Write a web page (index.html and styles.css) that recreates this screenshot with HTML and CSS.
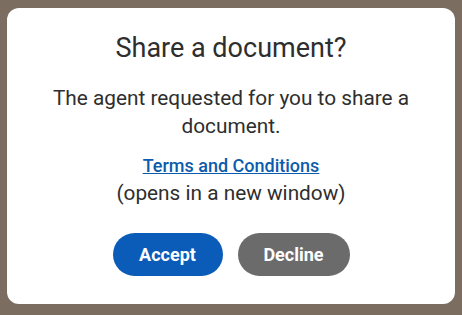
FILE: index.html
```html
<!DOCTYPE html>
<html lang="en">
<head>
  <meta charset="UTF-8">
  <title>Share a document?</title>
  <link rel="stylesheet" href="styles.css">
</head>
<body>
  <div class="dialog">
    <h1 class="dialog-title">Share a document?</h1>
    <p class="dialog-text">The agent requested for you to share a document.</p>
    <div class="terms">
      <a href="#" class="terms-link">Terms and Conditions</a>
      <span class="terms-note">(opens in a new window)</span>
    </div>
    <div class="actions">
      <button class="btn btn-accept">Accept</button>
      <button class="btn btn-decline">Decline</button>
    </div>
  </div>
</body>
</html>
```

FILE: styles.css
```css
html, body {
  height: 100%;
}

body {
  margin: 0;
  padding: 8px 7px 11px 7px;
  box-sizing: border-box;
  background-color: #7b6e60;
  font-family: Roboto, "Liberation Sans", sans-serif;
}

.dialog {
  background-color: #fff;
  border-radius: 12px;
  height: 100%;
  box-sizing: border-box;
  padding: 23px 20px 0;
  text-align: center;
  color: #2e2e2e;
}

.dialog-title {
  margin: 0;
  font-size: 27px;
  font-weight: 400;
  line-height: 34px;
}

.dialog-text {
  margin: 19px 0 0;
  font-size: 20.8px;
  line-height: 28px;
}

.terms {
  margin-top: 14px;
  display: flex;
  flex-direction: column;
  align-items: center;
}

.terms-link {
  color: #0b5cae;
  font-size: 18px;
  font-weight: 500;
  line-height: 24px;
}

.terms-note {
  font-size: 20.8px;
  line-height: 30px;
}

.actions {
  margin-top: 25px;
  display: flex;
  justify-content: center;
  gap: 15px;
}

.btn {
  border: none;
  border-radius: 22px;
  height: 43px;
  padding: 0;
  color: #fff;
  font-family: Roboto, "Liberation Sans", sans-serif;
  font-size: 18px;
  font-weight: 700;
  cursor: pointer;
}

.btn-accept {
  background-color: #0a5cb8;
  width: 110px;
}

.btn-decline {
  background-color: #6b6b6b;
  width: 112px;
}
```
